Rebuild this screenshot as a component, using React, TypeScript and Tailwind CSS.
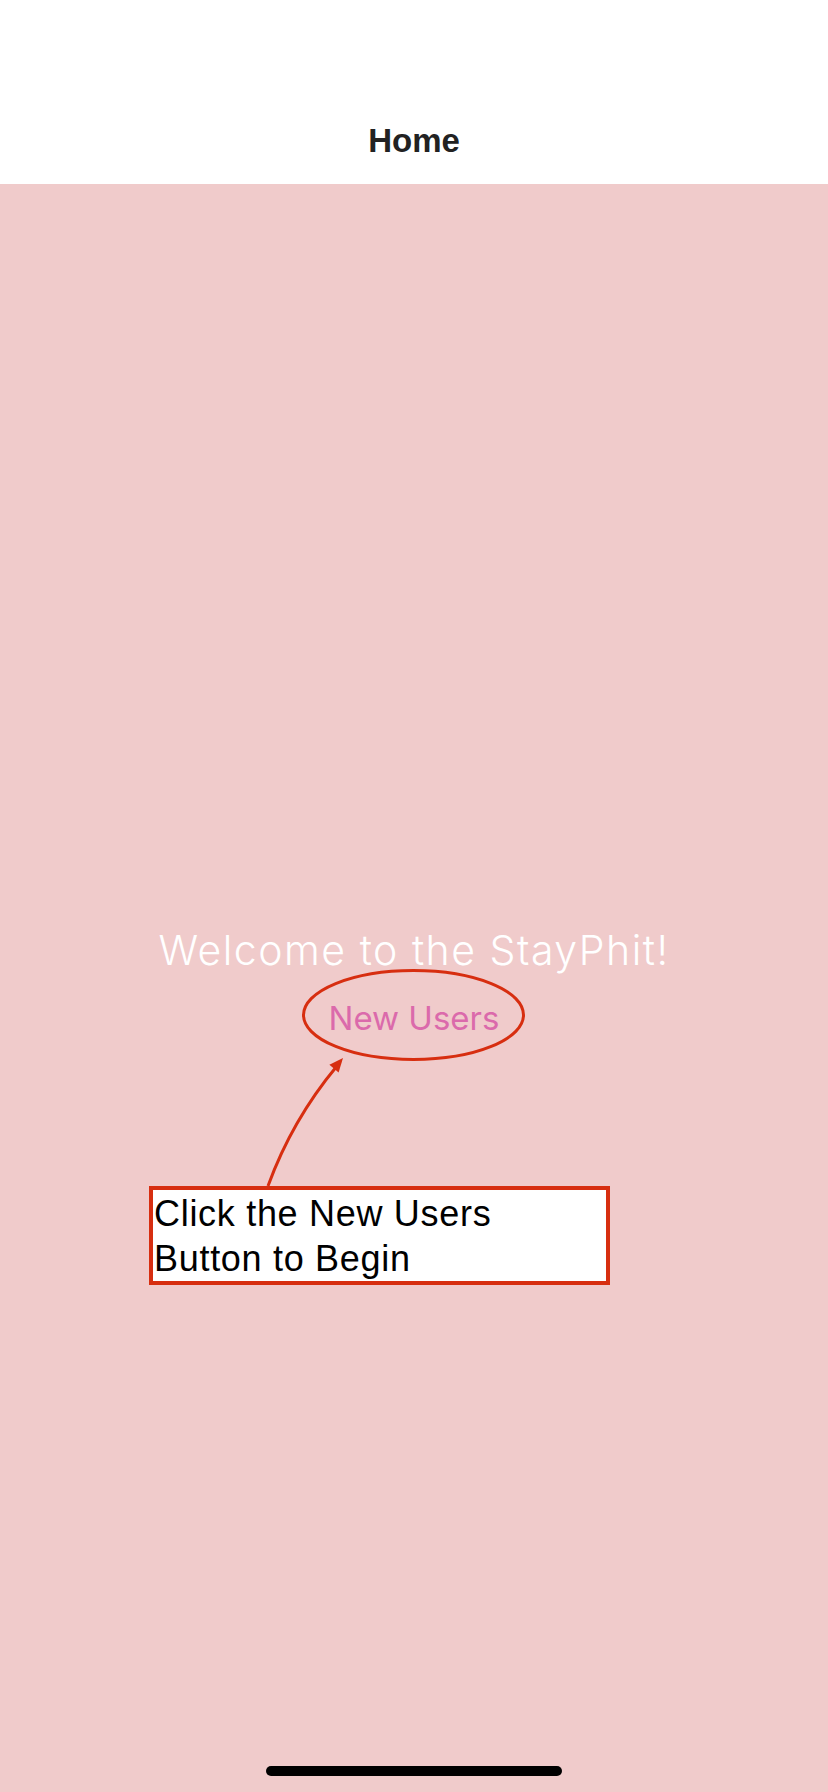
export default function App() {
  return (
    <div className="relative flex min-h-[1792px] w-full flex-col bg-[#f0cbcb]">
      <header className="flex h-[184px] items-end justify-center bg-white pb-[23px]">
        <h1 className="font-['Liberation_Sans',Arial,sans-serif] text-[33px] leading-[40px] font-bold text-[#222]">
          Home
        </h1>
      </header>

      <main className="flex flex-1 flex-col items-center pt-[742px]">
        <p className="font-['Inter',sans-serif] text-[41px] leading-[48px] font-light tracking-[1.5px] text-white">
          Welcome to the StayPhit!
        </p>
        <button className="mt-[24px] font-['Inter',sans-serif] text-[33px] leading-[40px] font-normal text-[#db6aab]">
          New Users
        </button>

        <div className="mt-[148px] ml-[149px] w-[461px] self-start border-4 border-[#d72e10] bg-white pt-px pl-px">
          <p className="font-['Liberation_Sans',Arial,sans-serif] text-[36px] leading-[45px] tracking-[0.7px] text-black">
            Click the New Users
            <br />
            Button to Begin
          </p>
        </div>

        <div className="mt-auto mb-[16px] h-[10px] w-[296px] rounded-full bg-black" />
      </main>

      {/* annotation marks */}
      <svg
        className="pointer-events-none absolute inset-0 h-full w-full"
        viewBox="0 0 828 1792"
        fill="none"
      >
        <ellipse cx="413.5" cy="1015" rx="110" ry="44.5" stroke="#d72e10" strokeWidth="3" />
        <path d="M268 1186 Q292 1120 337 1066" stroke="#d72e10" strokeWidth="3" />
        <polygon points="343,1058 338.6,1072.6 329.4,1064.8" fill="#d72e10" />
      </svg>
    </div>
  );
}
